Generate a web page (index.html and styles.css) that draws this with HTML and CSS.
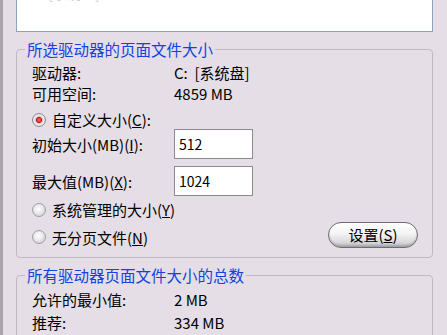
FILE: index.html
```html
<!DOCTYPE html>
<html lang="zh-CN">
  <head>
    <meta charset="UTF-8" />
    <meta name="viewport" content="width=device-width, initial-scale=1.0" />
    <title>虚拟内存</title>
    <link rel="stylesheet" href="styles.css">
  </head>
  <body>
    <div class="dialog">
      <div class="drive-list">
        <div class="drive-item">C:&nbsp;&nbsp;&nbsp;[系统盘]&nbsp;&nbsp;&nbsp;&nbsp;&nbsp;512 - 1024</div>
      </div>

      <fieldset class="group">
        <legend>所选驱动器的页面文件大小</legend>

        <div class="info-row">
          <span class="info-label">驱动器:</span>
          <span class="info-value">C:&nbsp;&nbsp;[系统盘]</span>
        </div>
        <div class="info-row">
          <span class="info-label">可用空间:</span>
          <span class="info-value">4859 MB</span>
        </div>

        <label class="radio-row radio-first">
          <span class="radio checked"></span>
          <span>自定义大小(<u>C</u>):</span>
        </label>

        <div class="field-row">
          <label for="initialSize" class="info-label">初始大小(MB)(<u>I</u>):</label>
          <input type="text" id="initialSize" value="512" />
        </div>
        <div class="field-row">
          <label for="maxSize" class="info-label">最大值(MB)(<u>X</u>):</label>
          <input type="text" id="maxSize" value="1024" />
        </div>

        <label class="radio-row">
          <span class="radio"></span>
          <span>系统管理的大小(<u>Y</u>)</span>
        </label>

        <div class="last-row">
          <label class="radio-row">
            <span class="radio"></span>
            <span>无分页文件(<u>N</u>)</span>
          </label>
          <button class="set-button">设置(<u>S</u>)</button>
        </div>
      </fieldset>

      <fieldset class="group total">
        <legend>所有驱动器页面文件大小的总数</legend>
        <div class="info-row">
          <span class="info-label">允许的最小值:</span>
          <span class="info-value">2 MB</span>
        </div>
        <div class="info-row">
          <span class="info-label">推荐:</span>
          <span class="info-value">334 MB</span>
        </div>
      </fieldset>
    </div>
  </body>
</html>
```

FILE: styles.css
```css
* {
  margin: 0;
  padding: 0;
  box-sizing: border-box;
}

body {
  font-family: "Noto Sans CJK SC", "Noto Sans", sans-serif;
  font-size: 15px;
  color: #000;
  background-color: #e5dee7;
  overflow: hidden;
}

.dialog {
  width: 447px;
  height: 335px;
  padding: 0 14px 0 13px;
  border-left: 3px solid #aaa5ad;
  overflow: hidden;
}

.drive-list {
  height: 32px;
  background-color: #fff;
  border: 1px solid #8ba3bd;
  border-top: none;
  overflow: hidden;
}

.drive-item {
  margin-top: -15px;
  padding-left: 9px;
  font-size: 14px;
  line-height: 16px;
  color: #cfcfcf;
}

.group {
  margin-top: 9px;
  padding: 5px 14px 9px 15px;
  border: 1px solid #bfb9c3;
  border-radius: 4px;
}

.group legend {
  margin-left: -7px;
  padding: 0 2px;
  font-size: 15.5px;
  line-height: 16px;
  color: #1144dd;
}

.info-row {
  display: flex;
  height: 21px;
  line-height: 21px;
}

.info-label {
  width: 142px;
  flex-shrink: 0;
  white-space: nowrap;
}

.info-value {
  white-space: nowrap;
}

.radio-row {
  display: flex;
  align-items: center;
  gap: 6px;
  height: 21px;
  white-space: nowrap;
}

.radio-first {
  height: 19px;
  margin-top: 6px;
}

.radio {
  flex-shrink: 0;
  width: 14px;
  height: 14px;
  border-radius: 50%;
  border: 1px solid #a29ea6;
  background: radial-gradient(circle at 45% 40%, #ffffff 0%, #ecebee 40%, #cdcad0 85%, #b5b1b8 100%);
}

.radio.checked {
  border-color: #8a868d;
  background: radial-gradient(circle at 50% 50%, #ff7a6a 0%, #e02a1c 25%, #c8141a 32%, #c9c5cc 38%, #f1eff2 60%, #b5b1b8 100%);
}

.field-row {
  display: flex;
  align-items: center;
  margin-bottom: 7px;
}

.field-row input {
  width: 79px;
  height: 30px;
  padding: 3px 4px;
  font-family: "Noto Sans CJK SC", sans-serif;
  font-size: 14px;
  line-height: 16px;
  border: 1px solid #8c8a8e;
  background-color: #fff;
  color: #000;
  outline: none;
}

.field-row + .radio-row {
  margin-top: -4px;
}

.last-row {
  display: flex;
  align-items: center;
  justify-content: space-between;
  height: 26px;
  margin-top: 2px;
}

.last-row .radio-row {
  padding-top: 4px;
}

.set-button {
  width: 90px;
  height: 26px;
  font-family: "Noto Sans CJK SC", sans-serif;
  font-size: 15px;
  line-height: 20px;
  color: #000;
  border: 1px solid #6f6c72;
  border-radius: 13px;
  background: linear-gradient(#ffffff 0%, #f4f4f4 45%, #d9d8db 80%, #bdbcc0 100%);
  box-shadow: inset 0 -2px 2px rgba(0, 0, 0, 0.15);
}

.total {
  padding-top: 5px;
}

.total .info-row {
  height: 23px;
  line-height: 23px;
}
```
